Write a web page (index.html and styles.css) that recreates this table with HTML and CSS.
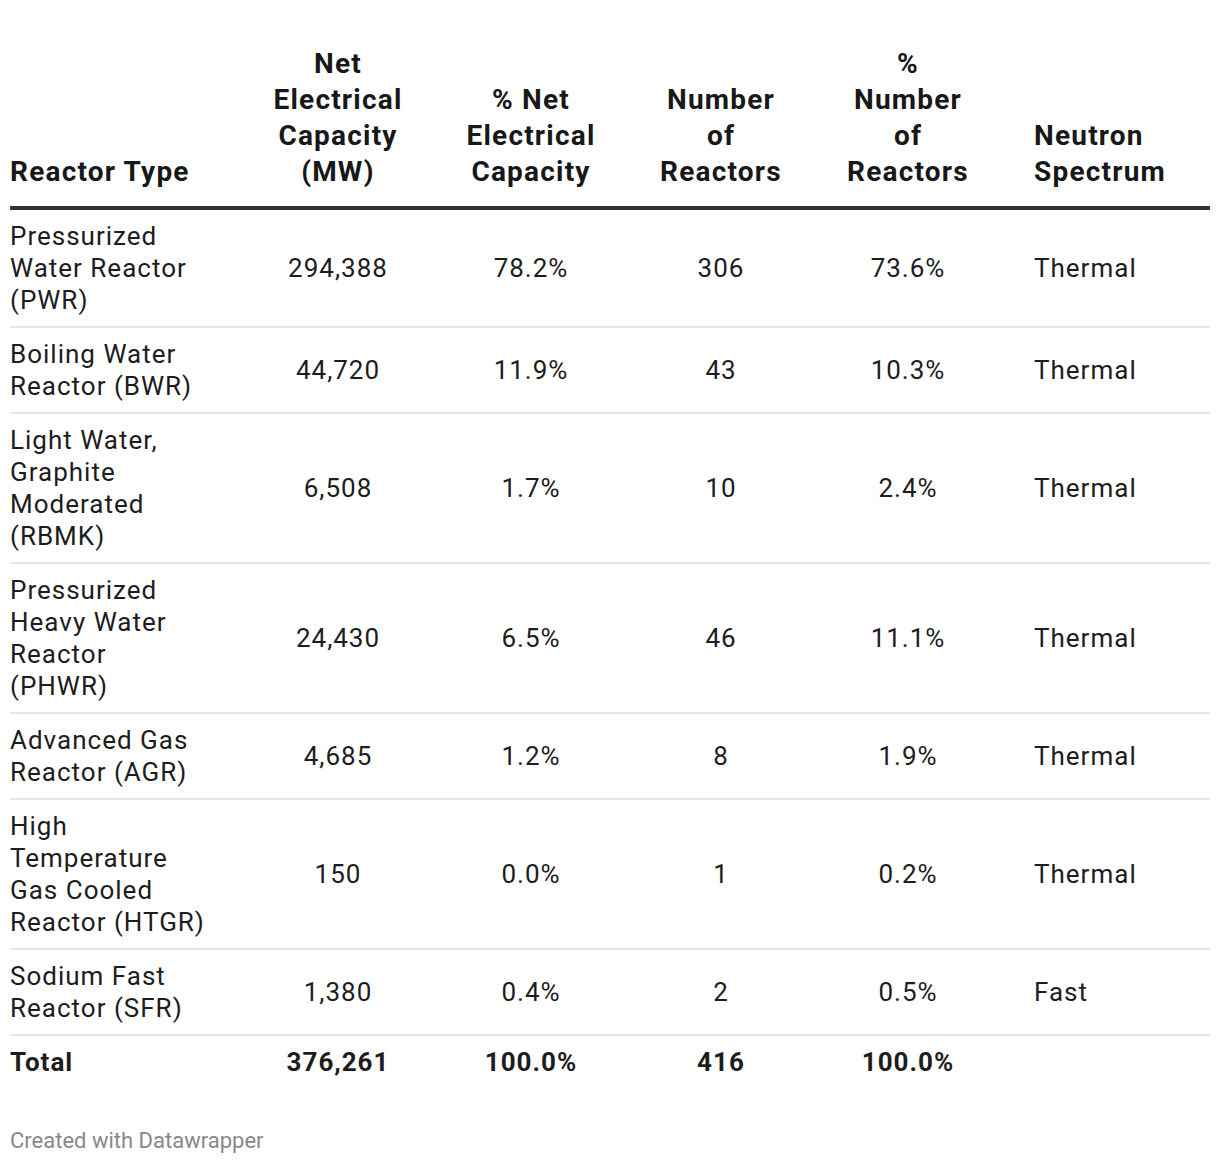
FILE: index.html
```html
<!DOCTYPE html>
<html lang="en">
<head>
<meta charset="utf-8">
<title>Reactor Types</title>
<link rel="stylesheet" href="styles.css">
</head>
<body>
<div class="chart">
  <table class="dw-table">
    <colgroup>
      <col class="c-type">
      <col class="c-cap">
      <col class="c-pcap">
      <col class="c-num">
      <col class="c-pnum">
      <col class="c-spec">
    </colgroup>
    <thead>
      <tr>
        <th class="left first">Reactor Type</th>
        <th class="center">Net Electrical Capacity (MW)</th>
        <th class="center">% Net Electrical Capacity</th>
        <th class="center">Number of Reactors</th>
        <th class="center">% Number of Reactors</th>
        <th class="left last">Neutron Spectrum</th>
      </tr>
    </thead>
    <tbody>
      <tr>
        <td class="left first">Pressurized Water Reactor (PWR)</td>
        <td class="center">294,388</td>
        <td class="center">78.2%</td>
        <td class="center">306</td>
        <td class="center">73.6%</td>
        <td class="left last">Thermal</td>
      </tr>
      <tr>
        <td class="left first">Boiling Water Reactor (BWR)</td>
        <td class="center">44,720</td>
        <td class="center">11.9%</td>
        <td class="center">43</td>
        <td class="center">10.3%</td>
        <td class="left last">Thermal</td>
      </tr>
      <tr>
        <td class="left first">Light Water, Graphite Moderated (RBMK)</td>
        <td class="center">6,508</td>
        <td class="center">1.7%</td>
        <td class="center">10</td>
        <td class="center">2.4%</td>
        <td class="left last">Thermal</td>
      </tr>
      <tr>
        <td class="left first">Pressurized Heavy Water Reactor (PHWR)</td>
        <td class="center">24,430</td>
        <td class="center">6.5%</td>
        <td class="center">46</td>
        <td class="center">11.1%</td>
        <td class="left last">Thermal</td>
      </tr>
      <tr>
        <td class="left first">Advanced Gas Reactor (AGR)</td>
        <td class="center">4,685</td>
        <td class="center">1.2%</td>
        <td class="center">8</td>
        <td class="center">1.9%</td>
        <td class="left last">Thermal</td>
      </tr>
      <tr>
        <td class="left first">High Temperature Gas Cooled Reactor (HTGR)</td>
        <td class="center">150</td>
        <td class="center">0.0%</td>
        <td class="center">1</td>
        <td class="center">0.2%</td>
        <td class="left last">Thermal</td>
      </tr>
      <tr>
        <td class="left first">Sodium Fast Reactor (SFR)</td>
        <td class="center">1,380</td>
        <td class="center">0.4%</td>
        <td class="center">2</td>
        <td class="center">0.5%</td>
        <td class="left last">Fast</td>
      </tr>
      <tr class="total">
        <td class="left first">Total</td>
        <td class="center">376,261</td>
        <td class="center">100.0%</td>
        <td class="center">416</td>
        <td class="center">100.0%</td>
        <td class="left last"></td>
      </tr>
    </tbody>
  </table>
  <div class="footer">Created with Datawrapper</div>
</div>
</body>
</html>
```

FILE: styles.css
```css
* { box-sizing: border-box; }

html, body {
  margin: 0;
  padding: 0;
  background: #ffffff;
}

body {
  font-family: Roboto, "Liberation Sans", Arial, sans-serif;
  color: #1d1d1d;
}

.chart {
  padding: 36px 10px 0 10px;
}

.dw-table {
  width: 1200px;
  table-layout: fixed;
  border-collapse: collapse;
  border-spacing: 0;
}

.c-type { width: 232px; }
.c-cap { width: 192px; }
.c-pcap { width: 194px; }
.c-num { width: 186px; }
.c-pnum { width: 188px; }
.c-spec { width: 208px; }

.dw-table th {
  font-size: 28px;
  line-height: 36px;
  font-weight: 700;
  letter-spacing: 1.2px;
  color: #181818;
  vertical-align: bottom;
  padding: 10px 30px 16px 30px;
  border-bottom: 4px solid #333333;
}

.dw-table td {
  font-size: 26px;
  line-height: 32px;
  font-weight: 400;
  letter-spacing: 1px;
  vertical-align: middle;
  padding: 10px 30px;
  border-top: 2px solid #e6e6e6;
}

.dw-table tbody tr:first-child td {
  border-top: none;
}

.dw-table .left { text-align: left; }
.dw-table .center { text-align: center; }

.dw-table .first {
  padding-left: 0;
  padding-right: 35px;
}

.dw-table .last {
  padding-left: 32px;
  padding-right: 0;
}

.dw-table .total td {
  font-weight: 700;
}

.footer {
  margin-top: 40px;
  font-size: 22px;
  line-height: 26px;
  color: #888888;
}
```
